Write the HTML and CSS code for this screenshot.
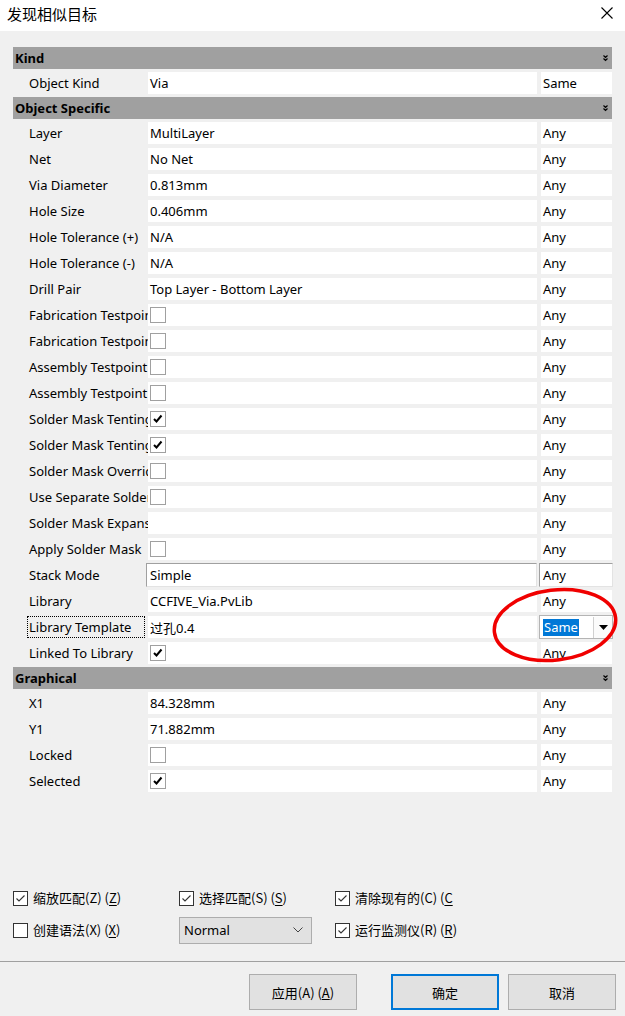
FILE: index.html
```html
<!DOCTYPE html>
<html lang="zh">
<head>
<meta charset="utf-8">
<title>发现相似目标</title>
<link rel="stylesheet" href="styles.css">
</head>
<body>
<div class="window">
  <div class="titlebar">
    <span class="title">发现相似目标</span>
    <svg class="close" width="12" height="12" viewBox="0 0 12 12"><path d="M0.5 0.5 L11.5 11.5 M11.5 0.5 L0.5 11.5" stroke="#000" stroke-width="1.1" fill="none"/></svg>
  </div>

  <div class="grid">
    <div class="hdr"><span>Kind</span><svg class="chev" width="5" height="7" viewBox="0 0 5 7"><path d="M0.5 0.5 L2.5 2.5 L4.5 0.5 M0.5 3.5 L2.5 5.5 L4.5 3.5" stroke="#000" stroke-width="1.2" fill="none"/></svg></div>
    <div class="row"><div class="lbl">Object Kind</div><div class="val">Via</div><div class="any">Same</div></div>

    <div class="hdr"><span>Object Specific</span><svg class="chev" width="5" height="7" viewBox="0 0 5 7"><path d="M0.5 0.5 L2.5 2.5 L4.5 0.5 M0.5 3.5 L2.5 5.5 L4.5 3.5" stroke="#000" stroke-width="1.2" fill="none"/></svg></div>
    <div class="row"><div class="lbl">Layer</div><div class="val">MultiLayer</div><div class="any">Any</div></div>
    <div class="row"><div class="lbl">Net</div><div class="val">No Net</div><div class="any">Any</div></div>
    <div class="row"><div class="lbl">Via Diameter</div><div class="val">0.813mm</div><div class="any">Any</div></div>
    <div class="row"><div class="lbl">Hole Size</div><div class="val">0.406mm</div><div class="any">Any</div></div>
    <div class="row"><div class="lbl">Hole Tolerance (+)</div><div class="val">N/A</div><div class="any">Any</div></div>
    <div class="row"><div class="lbl">Hole Tolerance (-)</div><div class="val">N/A</div><div class="any">Any</div></div>
    <div class="row"><div class="lbl">Drill Pair</div><div class="val">Top Layer - Bottom Layer</div><div class="any">Any</div></div>
    <div class="row"><div class="lbl">Fabrication Testpoint - Top</div><div class="val"><span class="cb"></span></div><div class="any">Any</div></div>
    <div class="row"><div class="lbl">Fabrication Testpoint - Bottom</div><div class="val"><span class="cb"></span></div><div class="any">Any</div></div>
    <div class="row"><div class="lbl">Assembly Testpoint - Top</div><div class="val"><span class="cb"></span></div><div class="any">Any</div></div>
    <div class="row"><div class="lbl">Assembly Testpoint - Bottom</div><div class="val"><span class="cb"></span></div><div class="any">Any</div></div>
    <div class="row"><div class="lbl">Solder Mask Tenting - Top</div><div class="val"><span class="cb"><svg width="14" height="14" viewBox="0 0 14 14"><path d="M3 7 L5.5 9.5 L10.5 3.5" stroke="#000" stroke-width="2" fill="none"/></svg></span></div><div class="any">Any</div></div>
    <div class="row"><div class="lbl">Solder Mask Tenting - Bottom</div><div class="val"><span class="cb"><svg width="14" height="14" viewBox="0 0 14 14"><path d="M3 7 L5.5 9.5 L10.5 3.5" stroke="#000" stroke-width="2" fill="none"/></svg></span></div><div class="any">Any</div></div>
    <div class="row"><div class="lbl">Solder Mask Override</div><div class="val"><span class="cb"></span></div><div class="any">Any</div></div>
    <div class="row"><div class="lbl">Use Separate Solder Mask</div><div class="val"><span class="cb"></span></div><div class="any">Any</div></div>
    <div class="row"><div class="lbl">Solder Mask Expansion</div><div class="val"></div><div class="any">Any</div></div>
    <div class="row"><div class="lbl">Apply Solder Mask</div><div class="val"><span class="cb"></span></div><div class="any">Any</div></div>
    <div class="row"><div class="lbl">Stack Mode</div><div class="val sunken">Simple</div><div class="any sunken">Any</div></div>
    <div class="row"><div class="lbl">Library</div><div class="val">CCFIVE_Via.PvLib</div><div class="any">Any</div></div>
    <div class="row"><div class="lbl focus">Library Template</div><div class="val">过孔0.4</div>
      <div class="any combo">
        <span class="sel">Same</span>
        <span class="drop"><svg width="9" height="5" viewBox="0 0 9 5"><path d="M0 0 L9 0 L4.5 5 Z" fill="#000"/></svg></span>
        <svg class="ring" width="134" height="84" viewBox="0 0 134 84"><ellipse cx="67" cy="42" rx="61" ry="35" transform="rotate(-7 67 42)" fill="none" stroke="#f00000" stroke-width="3.5"/></svg>
      </div>
    </div>
    <div class="row"><div class="lbl">Linked To Library</div><div class="val"><span class="cb"><svg width="14" height="14" viewBox="0 0 14 14"><path d="M3 7 L5.5 9.5 L10.5 3.5" stroke="#000" stroke-width="2" fill="none"/></svg></span></div><div class="any">Any</div></div>

    <div class="hdr"><span>Graphical</span><svg class="chev" width="5" height="7" viewBox="0 0 5 7"><path d="M0.5 0.5 L2.5 2.5 L4.5 0.5 M0.5 3.5 L2.5 5.5 L4.5 3.5" stroke="#000" stroke-width="1.2" fill="none"/></svg></div>
    <div class="row"><div class="lbl">X1</div><div class="val">84.328mm</div><div class="any">Any</div></div>
    <div class="row"><div class="lbl">Y1</div><div class="val">71.882mm</div><div class="any">Any</div></div>
    <div class="row"><div class="lbl">Locked</div><div class="val"><span class="cb"></span></div><div class="any">Any</div></div>
    <div class="row"><div class="lbl">Selected</div><div class="val"><span class="cb"><svg width="14" height="14" viewBox="0 0 14 14"><path d="M3 7 L5.5 9.5 L10.5 3.5" stroke="#000" stroke-width="2" fill="none"/></svg></span></div><div class="any">Any</div></div>
  </div>

  <div class="options">
    <label class="opt"><span class="wcb"><svg width="13" height="13" viewBox="0 0 13 13"><path d="M2.5 6.5 L5 9 L10.5 3.5" stroke="#333" stroke-width="1.1" fill="none"/></svg></span><span class="otext">缩放匹配(Z) (<u>Z</u>)</span></label>
    <label class="opt"><span class="wcb"><svg width="13" height="13" viewBox="0 0 13 13"><path d="M2.5 6.5 L5 9 L10.5 3.5" stroke="#333" stroke-width="1.1" fill="none"/></svg></span><span class="otext">选择匹配(S) (<u>S</u>)</span></label>
    <label class="opt clip"><span class="wcb"><svg width="13" height="13" viewBox="0 0 13 13"><path d="M2.5 6.5 L5 9 L10.5 3.5" stroke="#333" stroke-width="1.1" fill="none"/></svg></span><span class="otext">清除现有的(C) (<u>C</u>)</span></label>

    <label class="opt"><span class="wcb"></span><span class="otext">创建语法(X) (<u>X</u>)</span></label>
    <div class="select"><span>Normal</span><svg width="10" height="6" viewBox="0 0 10 6"><path d="M0.5 0.5 L5 5 L9.5 0.5" stroke="#444" stroke-width="1" fill="none"/></svg></div>
    <label class="opt wide"><span class="wcb"><svg width="13" height="13" viewBox="0 0 13 13"><path d="M2.5 6.5 L5 9 L10.5 3.5" stroke="#333" stroke-width="1.1" fill="none"/></svg></span><span class="otext">运行监测仪(R) (<u>R</u>)</span></label>
  </div>

  <div class="footer">
    <button class="btn apply">应用(A) (<u>A</u>)</button>
    <button class="btn ok">确定</button>
    <button class="btn cancel">取消</button>
  </div>
</div>
</body>
</html>
```
FILE: styles.css
```css
html, body {
  margin: 0;
  padding: 0;
}
body {
  font-family: "Noto Sans", "Noto Sans CJK SC", sans-serif;
  color: #000;
  background: #f0f0f0;
}
.window {
  width: 625px;
  height: 1016px;
  background: #f0f0f0;
  display: flex;
  flex-direction: column;
  overflow: hidden;
}
.titlebar {
  height: 31px;
  background: #fff;
  display: flex;
  align-items: center;
  justify-content: space-between;
  padding: 0 12px 0 7px;
  box-sizing: border-box;
  flex: none;
}
.title {
  font-family: "Noto Sans CJK SC", sans-serif;
  font-size: 15px;
  margin-top: -5px;
}
.close {
  margin-top: -5px;
}

.grid {
  margin: 16px 13px 0;
  width: 599px;
  font-size: 13px;
}
.hdr {
  height: 22px;
  background: #a0a0a0;
  display: flex;
  align-items: center;
  justify-content: space-between;
  padding: 0 4px 0 2px;
  font-weight: bold;
  margin-bottom: 3px;
}
.row + .hdr {
  margin-top: -1px;
}
.row {
  display: grid;
  grid-template-columns: 135px 389px 75px;
  height: 22px;
  margin-bottom: 4px;
}
.lbl {
  padding: 0 4px 0 16px;
  overflow: hidden;
  white-space: nowrap;
  line-height: 22px;
}
.lbl.focus {
  margin-left: 14px;
  width: 118px;
  box-sizing: border-box;
  border: 1px dotted #000;
  padding-left: 1px;
  line-height: 20px;
}
.val, .any {
  background: #fff;
  display: flex;
  align-items: center;
  white-space: nowrap;
  overflow: hidden;
}
.val {
  padding-left: 2px;
}
.any {
  padding-left: 2px;
  margin-left: 4px;
}
.sunken {
  border-top: 1px solid #a0a0a0;
  border-left: 1px solid #a0a0a0;
  border-right: 1px solid #e3e3e3;
  border-bottom: 1px solid #e3e3e3;
  margin-top: -1px;
  margin-bottom: -1px;
  margin-left: -2px;
  padding-left: 3px;
}
.any.sunken {
  margin-left: 2px;
  margin-right: -1px;
}
.cb {
  width: 14px;
  height: 14px;
  border: 1px solid #a0a0a0;
  background: #fff;
  display: inline-flex;
}
.combo {
  position: relative;
  overflow: visible;
  border: 1px solid #b4b4b4;
  margin: -1px -1px -1px 2px;
  padding-left: 3px;
  justify-content: space-between;
}
.sel {
  background: #0078d7;
  color: #fff;
  line-height: 17px;
  padding: 0 1px;
}
.drop {
  width: 18px;
  height: 21px;
  border-left: 1px solid #d0d0d0;
  background: #fbfbfb;
  display: flex;
  align-items: center;
  justify-content: center;
}
.ring {
  position: absolute;
  left: -52px;
  top: -33px;
  pointer-events: none;
}

.options {
  margin: 89px 0 0 13px;
  display: grid;
  grid-template-columns: 166px 156px 118px;
  grid-auto-rows: 26px;
  row-gap: 6px;
  font-family: "Noto Sans CJK SC", sans-serif;
  font-size: 13px;
}
.opt {
  display: flex;
  align-items: center;
  white-space: nowrap;
}
.opt.clip {
  overflow: hidden;
}
.wcb {
  width: 13px;
  height: 13px;
  border: 1px solid #333;
  background: #fff;
  display: inline-flex;
  flex: none;
  margin-right: 5px;
}
.otext {
  margin-top: -1px;
}
.otext u {
  text-underline-offset: 2px;
}
.select {
  width: 133px;
  height: 27px;
  box-sizing: border-box;
  background: #e1e1e1;
  border: 1px solid #adadad;
  display: flex;
  align-items: center;
  justify-content: space-between;
  padding: 0 8px 0 4px;
  align-self: center;
  font-family: "Noto Sans", sans-serif;
  font-size: 13px;
}

.footer {
  margin-top: 18px;
  border-top: 1px solid #a0a0a0;
  padding: 12px 9px 0 0;
  display: flex;
  justify-content: flex-end;
}
.btn {
  width: 108px;
  height: 36px;
  box-sizing: border-box;
  background: #e1e1e1;
  border: 1px solid #adadad;
  font-family: "Noto Sans CJK SC", sans-serif;
  font-size: 13px;
  color: #000;
  padding: 0;
  margin: 0;
}
.btn.apply {
  margin-right: 34px;
}
.btn.ok {
  border: 2px solid #0078d7;
  margin-right: 9px;
}
```
